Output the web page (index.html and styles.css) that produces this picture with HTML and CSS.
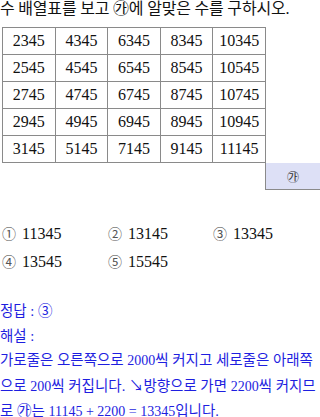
FILE: index.html
```html
<!DOCTYPE html>
<html lang="ko">
<head>
<meta charset="utf-8">
<link rel="stylesheet" href="styles.css">
</head>
<body>
<div class="page">
  <p class="question">수 배열표를 보고 ㉮에 알맞은 수를 구하시오.</p>
  <div class="figure">
    <table class="grid">
      <tr><td>2345</td><td>4345</td><td>6345</td><td>8345</td><td>10345</td></tr>
      <tr><td>2545</td><td>4545</td><td>6545</td><td>8545</td><td>10545</td></tr>
      <tr><td>2745</td><td>4745</td><td>6745</td><td>8745</td><td>10745</td></tr>
      <tr><td>2945</td><td>4945</td><td>6945</td><td>8945</td><td>10945</td></tr>
      <tr><td>3145</td><td>5145</td><td>7145</td><td>9145</td><td>11145</td></tr>
    </table>
    <div class="blank"><span class="mark">㉮</span></div>
  </div>
  <div class="choices">
    <span class="choice"><span class="num">①</span> 11345</span>
    <span class="choice"><span class="num">②</span> 13145</span>
    <span class="choice"><span class="num">③</span> 13345</span>
    <span class="choice"><span class="num">④</span> 13545</span>
    <span class="choice"><span class="num">⑤</span> 15545</span>
  </div>
  <div class="answer">
    <div class="line">정답 : ③</div>
    <div class="line">해설 :</div>
    <div class="line">가로줄은 오른쪽으로 <span class="d">2000</span>씩 커지고 세로줄은 아래쪽</div>
    <div class="line">으로 <span class="d">200</span>씩 커집니다. ↘방향으로 가면 <span class="d">2200</span>씩 커지므</div>
    <div class="line">로 ㉮는 <span class="d">11145 + 2200 = 13345</span>입니다.</div>
  </div>
</div>
</body>
</html>
```
FILE: styles.css
```css
html, body {
  margin: 0;
  padding: 0;
  background: #ffffff;
}
.page {
  width: 320px;
  font-family: "Liberation Serif", "Noto Sans CJK KR", serif;
  color: #111111;
}
.question {
  margin: 0;
  height: 27px;
  font-size: 16px;
  line-height: 17px;
  letter-spacing: -0.2px;
  white-space: nowrap;
}
.figure {
  display: grid;
  grid-template-columns: 265px 54px;
  grid-template-rows: auto 27px;
  padding-left: 2px;
}
.grid {
  border-collapse: collapse;
  grid-column: 1 / 3;
  width: 264px;
  table-layout: fixed;
}
.grid td {
  border: 1px solid #8a8a8a;
  height: 26px;
  padding: 0;
  text-align: center;
  font-size: 16px;
  color: #111;
}
.blank {
  grid-column: 2;
  grid-row: 2;
  margin-left: -2px;
  background: #dde0f6;
  border: 1px solid #8a8a8a;
  border-top: none;
  display: flex;
  align-items: center;
  justify-content: center;
}
.mark {
  font-family: "Noto Sans CJK KR", sans-serif;
  font-size: 12px;
  color: #333;
}
.choices {
  margin-top: 34px;
  display: grid;
  grid-template-columns: 106px 105px 100px;
  row-gap: 9px;
  padding-left: 2px;
  font-size: 16px;
  line-height: 18px;
}
.choice .num {
  font-family: "Noto Sans CJK KR", sans-serif;
  font-size: 14px;
  color: #555;
  margin-right: 2px;
}
.answer {
  margin-top: 28px;
  color: #1e1ee0;
  font-size: 14.5px;
  line-height: 24.5px;
}
.answer .line {
  white-space: nowrap;
}
.answer .d {
  font-size: 14px;
}
```
